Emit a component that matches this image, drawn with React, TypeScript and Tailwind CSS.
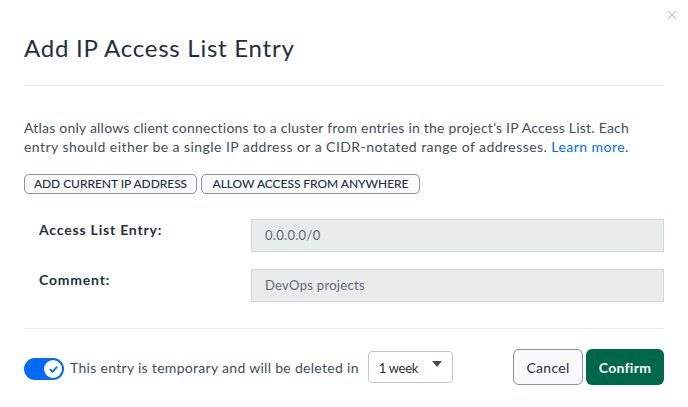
import React from "react";

export default function App() {
  return (
    <div
      className="w-[688px] h-[407px] bg-white relative overflow-hidden text-[#3d4f58]"
      style={{ fontFamily: "Lato, 'Noto Sans', sans-serif" }}
    >
      <button className="absolute right-[10px] top-[9px] w-[12px] h-[12px] text-[#c8cdcc]">
        <svg viewBox="0 0 12 12" width="12" height="12">
          <path d="M2 2 L10 10 M10 2 L2 10" stroke="currentColor" strokeWidth="1.4" />
        </svg>
      </button>

      <div className="px-[24px] pt-[33px]">
        <h1 className="text-[24px] leading-[30px] text-[#21313c] font-normal tracking-[0.75px]">
          Add IP Access List Entry
        </h1>
        <div className="mt-[22px] h-px bg-[#e8edeb]" />

        <p className="mt-[32px] text-[14px] leading-[19px] text-[#3d4f58]">
          <span className="tracking-[0.22px]">
            Atlas only allows client connections to a cluster from entries in the project’s IP Access List. Each
          </span>
          <br />
          <span className="tracking-[0.45px]">
            entry should either be a single IP address or a CIDR-notated range of addresses.{" "}
            <span className="text-[#016bf8]">Learn more</span>.
          </span>
        </p>

        <div className="mt-[18px] flex gap-[4px]">
          <button className="h-[20px] w-[173px] rounded-[5px] border border-[#889397] bg-[#f9fbfa] text-[12px] font-medium text-[#21313c] leading-none tracking-[-0.05px]">
            ADD CURRENT IP ADDRESS
          </button>
          <button className="h-[20px] w-[219px] rounded-[5px] border border-[#889397] bg-[#f9fbfa] text-[12px] font-medium text-[#21313c] leading-none tracking-[-0.05px]">
            ALLOW ACCESS FROM ANYWHERE
          </button>
        </div>

        <div className="mt-[25px] flex items-center">
          <div className="w-[227px] pl-[15px] pb-[12px] text-[14px] font-bold text-[#21313c] tracking-[0.8px]">
            Access List Entry:
          </div>
          <div className="flex-1 h-[33px] bg-[#e8edeb] border border-[#d3d9d8] flex items-center px-[13px] text-[13px] text-[#5c6c75] tracking-[0.3px]">
            0.0.0.0/0
          </div>
        </div>
        <div className="mt-[17px] flex items-center">
          <div className="w-[227px] pl-[15px] pb-[12px] text-[14px] font-bold text-[#21313c] tracking-[0.8px]">
            Comment:
          </div>
          <div className="flex-1 h-[33px] bg-[#e8edeb] border border-[#d3d9d8] flex items-center px-[13px] text-[13px] text-[#5c6c75] tracking-[0.3px]">
            DevOps projects
          </div>
        </div>

        <div className="mt-[26px] h-px bg-[#e8edeb]" />

        <div className="mt-[20px] flex items-center">
          <div className="relative w-[40px] h-[22px] mt-[4px] rounded-full bg-[#016bf8]">
            <div className="absolute right-[2px] top-[2px] w-[18px] h-[18px] rounded-full bg-white flex items-center justify-center">
              <svg viewBox="0 0 12 12" width="11" height="11">
                <path d="M2.5 6.2 L5 8.5 L9.5 3.5" fill="none" stroke="#016bf8" strokeWidth="2" strokeLinecap="round" strokeLinejoin="round" />
              </svg>
            </div>
          </div>
          <span className="ml-[6px] mt-[1px] text-[14px] text-[#3d4f58] tracking-[0.3px]">
            This entry is temporary and will be deleted in
          </span>
          <div className="ml-[9px] relative w-[85px] h-[32px] rounded-[4px] border border-[#c1c7c6] flex items-center pl-[10px] pt-[3px] text-[13px] text-[#21313c] tracking-[-0.3px]">
            1 week
            <svg className="absolute right-[10px] top-[9px]" viewBox="0 0 10 6" width="10" height="6">
              <path d="M0 0 L10 0 L5 6 Z" fill="#3d4f58" />
            </svg>
          </div>
          <div className="flex-1" />
          <button className="h-[36px] w-[70px] rounded-[6px] border border-[#889397] bg-[#f9fbfa] text-[14px] text-[#21313c] tracking-[0.3px]">
            Cancel
          </button>
          <button className="ml-[3px] h-[36px] w-[78px] rounded-[6px] bg-[#00684a] text-[14px] font-bold text-white tracking-[0.3px]">
            Confirm
          </button>
        </div>
      </div>
    </div>
  );
}
